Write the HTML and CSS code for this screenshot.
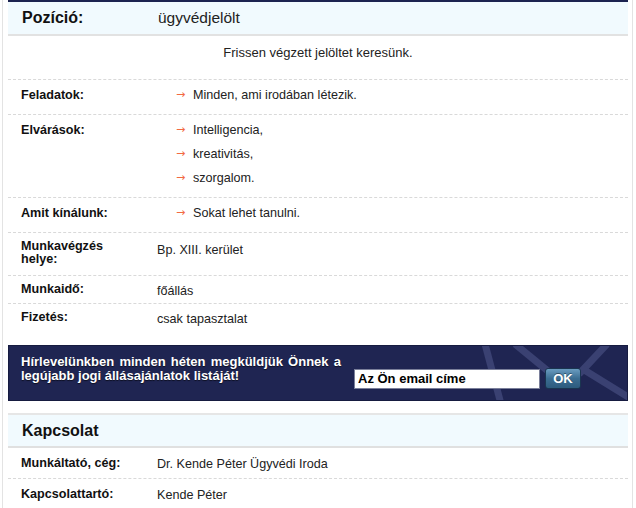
FILE: index.html
```html
<!DOCTYPE html>
<html lang="hu">
<head>
<meta charset="utf-8">
<title>Állásajánlat</title>
<link rel="stylesheet" href="styles.css">
</head>
<body>
<div class="page">
  <div class="inner">
    <div class="head head-top">
      <span class="head-label">Pozíció:</span>
      <span class="head-value">ügyvédjelölt</span>
    </div>
    <div class="desc">Frissen végzett jelöltet keresünk.</div>

    <div class="row list-row">
      <div class="label">Feladatok:</div>
      <ul class="items">
        <li>Minden, ami irodában létezik.</li>
      </ul>
    </div>
    <div class="row list-row">
      <div class="label">Elvárások:</div>
      <ul class="items">
        <li>Intelligencia,</li>
        <li>kreativitás,</li>
        <li>szorgalom.</li>
      </ul>
    </div>
    <div class="row list-row">
      <div class="label">Amit kínálunk:</div>
      <ul class="items">
        <li>Sokat lehet tanulni.</li>
      </ul>
    </div>
    <div class="row plain-row tall">
      <div class="label">Munkavégzés<br>helye:</div>
      <div class="value value-tall">Bp. XIII. kerület</div>
    </div>
    <div class="row plain-row">
      <div class="label">Munkaidő:</div>
      <div class="value">főállás</div>
    </div>
    <div class="row plain-row last">
      <div class="label">Fizetés:</div>
      <div class="value">csak tapasztalat</div>
    </div>

    <div class="newsletter">
      <svg class="nl-deco" width="620" height="56" viewBox="0 0 620 56" aria-hidden="true">
        <g stroke="#3a4172" stroke-width="7" stroke-linecap="butt" fill="none">
          <line x1="476" y1="-2" x2="492" y2="58"/>
          <line x1="506" y1="-2" x2="545" y2="30"/>
          <line x1="598" y1="-2" x2="570" y2="28"/>
          <line x1="572" y1="22" x2="624" y2="54"/>
        </g>
      </svg>
      <div class="nl-text">Hírlevelünkben minden héten megküldjük Önnek a legújabb jogi állásajánlatok listáját!</div>
      <form class="nl-form">
        <input class="nl-input" type="text" value="Az Ön email címe">
        <button class="nl-btn" type="button">OK</button>
      </form>
    </div>

    <div class="head head-contact">
      <span class="head-label">Kapcsolat</span>
    </div>
    <div class="row contact-row">
      <div class="label">Munkáltató, cég:</div>
      <div class="value">Dr. Kende Péter Ügyvédi Iroda</div>
    </div>
    <div class="row contact-row">
      <div class="label">Kapcsolattartó:</div>
      <div class="value">Kende Péter</div>
    </div>
  </div>
</div>
</body>
</html>
```

FILE: styles.css
```css
html, body {
  margin: 0;
  padding: 0;
  background: #ffffff;
}
body {
  font-family: "Liberation Sans", Arial, Helvetica, sans-serif;
  font-size: 12.6px;
  color: #222222;
}
.page {
  margin-left: 2px;
  width: 620px;
  min-height: 508px;
  border-left: 1px solid #e3e3e3;
  border-right: 1px solid #e3e3e3;
  padding: 0 4px 0 5px;
}
.inner {
  width: 620px;
}
.head {
  display: flex;
  align-items: center;
  background: #f1fafe;
  padding-left: 14px;
  color: #111111;
}
.head-top {
  border-top: 2px solid #1c2350;
  height: 32px;
  border-bottom: 2px solid #e2e2e2;
}
.head-label {
  font-weight: bold;
  font-size: 16px;
  width: 136px;
}
.head-value {
  font-size: 15.5px;
  color: #222;
}
.desc {
  text-align: center;
  font-size: 13px;
  line-height: 14px;
  padding: 10px 0 19px;
  color: #222;
}
.row {
  display: flex;
  border-top: 1px dashed #d9d9d9;
}
.label {
  width: 149px;
  flex: none;
  padding-left: 13px;
  box-sizing: border-box;
  font-weight: bold;
  color: #111111;
  font-size: 12.6px;
}
.list-row {
  padding: 3px 0 7px;
}
.list-row .label {
  line-height: 24px;
}
.items {
  list-style: none;
  margin: 0;
  padding: 0 0 0 19px;
}
.items li {
  line-height: 24px;
  display: flex;
  align-items: center;
}
.items li::before {
  content: "→";
  font-family: "DejaVu Sans", sans-serif;
  font-size: 11px;
  color: #f26a42;
  width: 17px;
  flex: none;
}
.plain-row {
  padding: 7px 0 7px;
}
.plain-row .label {
  line-height: 13px;
}
.plain-row.tall {
  padding-bottom: 9px;
}
.value {
  line-height: 13px;
  margin-top: 2px;
  margin-bottom: -2px;
}
.value-tall {
  margin-top: 4px;
  margin-bottom: -4px;
}
.newsletter {
  position: relative;
  overflow: hidden;
  margin-top: 14px;
  height: 56px;
  background: #1f2552;
  border: 1px solid #161b40;
  box-sizing: border-box;
  display: flex;
  padding: 0 0 0 12px;
}
.nl-deco {
  position: absolute;
  left: 0;
  top: 0;
}
.nl-text {
  position: relative;
  width: 320px;
  flex: none;
  padding-top: 9px;
  line-height: 14px;
  font-weight: bold;
  color: #ffffff;
  text-align: justify;
  text-shadow: 0 1px 1px rgba(0, 0, 0, 0.6);
  font-size: 13px;
}
.nl-form {
  position: relative;
  margin: 0 0 11px 13px;
  align-self: flex-end;
  display: flex;
  align-items: center;
  gap: 5px;
}
.nl-input {
  width: 186px;
  height: 20px;
  box-sizing: border-box;
  border: 1px solid #7a7f9a;
  padding: 0 3px;
  font-family: "Liberation Sans", Arial, sans-serif;
  font-weight: bold;
  font-size: 13px;
  color: #000;
  background: #ffffff;
  margin: 0;
}
.nl-btn {
  width: 36px;
  height: 21px;
  margin: 0;
  padding: 0;
  border: 1px solid #1a3550;
  border-radius: 3px;
  background: linear-gradient(#6a9cc0, #3b6d92 50%, #2d5b7e);
  color: #ffffff;
  font-family: "Liberation Sans", Arial, sans-serif;
  font-weight: bold;
  font-size: 13px;
  text-shadow: 0 -1px 0 rgba(0, 0, 0, 0.4);
}
.head-contact {
  margin-top: 12px;
  border-top: 2px solid #e6e6e6;
  height: 31px;
  border-bottom: 2px solid #e0e0e0;
}
.contact-row {
  border-top: none;
  border-bottom: 1px dashed #d9d9d9;
  padding: 9px 0 6px;
}
.contact-row .label {
  line-height: 13px;
}
.contact-row .value {
  line-height: 15px;
  margin: 0;
}
```
